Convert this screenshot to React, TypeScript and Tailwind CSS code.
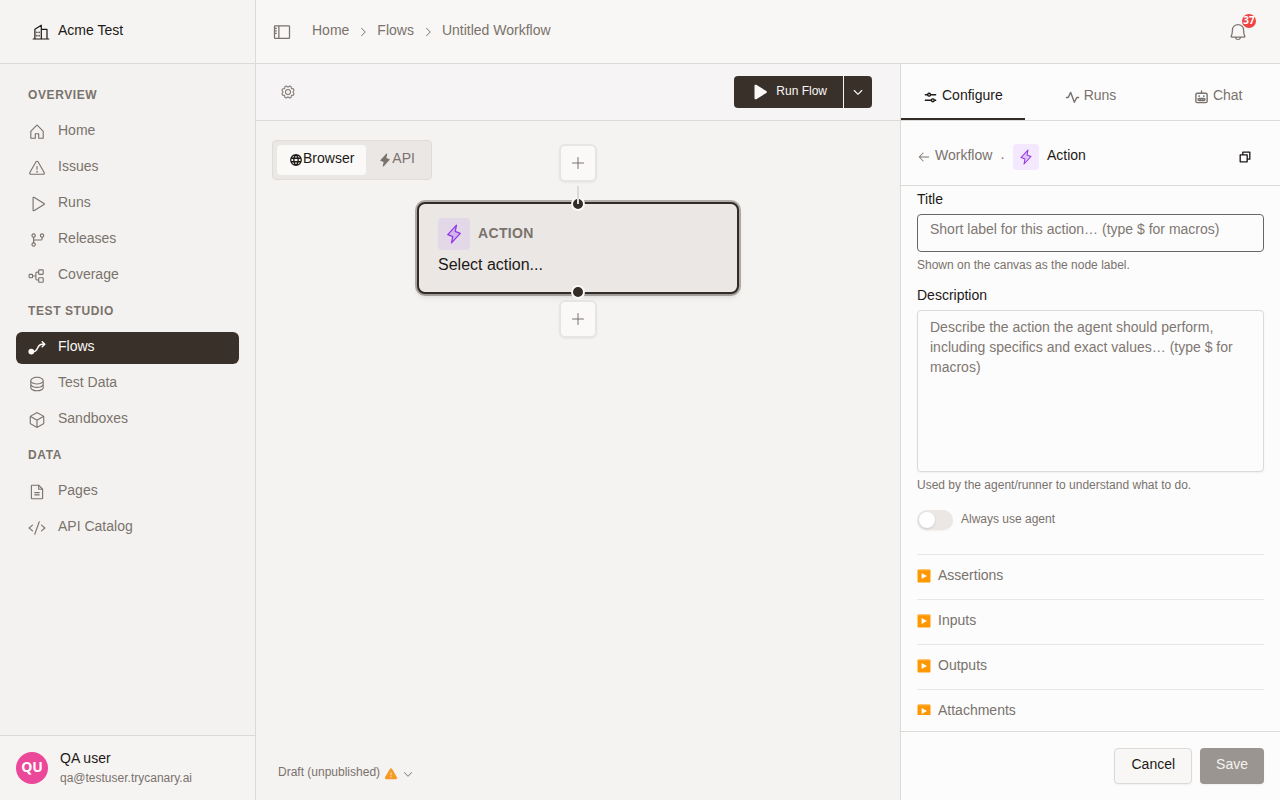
import { Fragment, useState } from 'react';
import type { ComponentType, ReactNode } from 'react';
import type { IconType } from 'react-icons';
import clsx from 'clsx';
import {
  PiArrowLeft,
  PiBell,
  PiCaretDown,
  PiCaretDownBold,
  PiCaretRight,
  PiCode,
  PiCopyBold,
  PiCube,
  PiDatabase,
  PiFileText,
  PiGear,
  PiGitBranch,
  PiGlobeBold,
  PiHouse,
  PiLightningDuotone,
  PiLightningFill,
  PiPlay,
  PiPlayFill,
  PiPlus,
  PiPulseBold,
  PiRobotBold,
  PiSidebar,
  PiSlidersHorizontalBold,
  PiTreeStructure,
  PiWarning,
  PiWarningFill,
} from 'react-icons/pi';

type NavItem = { label: string; icon: ComponentType<{ size?: number }>; active?: boolean };

function OfficeIcon({ size = 18 }: { size?: number }) {
  return (
    <svg width={size} height={size} viewBox="0 0 18 18" fill="none" stroke="currentColor" strokeWidth="1.2" strokeLinejoin="round" strokeLinecap="round" aria-hidden="true">
      <path d="M1.2 16h15.6M2.9 16V6.2L9.3 2.2V16M9.3 6.4H15V16" />
      <path d="M4.9 9v.6M7.1 9v.6M4.9 12.4v.6M7.1 12.4v.6" />
    </svg>
  );
}

function FlowIcon({ size = 18 }: { size?: number }) {
  return (
    <svg width={size} height={size} viewBox="0 0 18 18" fill="none" stroke="currentColor" strokeWidth="1.5" strokeLinejoin="round" strokeLinecap="round" aria-hidden="true">
      <circle cx="3.3" cy="12.6" r="2.9" fill="currentColor" stroke="none" />
      <path d="M5 12.9c5.6 0 3.6-7.6 9-7.6h2.6M14.2 2.8l2.6 2.5-2.6 2.5" />
    </svg>
  );
}

const navGroups: Array<{ title: string; items: NavItem[] }> = [
  {
    title: 'Overview',
    items: [
      { label: 'Home', icon: PiHouse },
      { label: 'Issues', icon: PiWarning },
      { label: 'Runs', icon: PiPlay },
      { label: 'Releases', icon: PiGitBranch },
      { label: 'Coverage', icon: PiTreeStructure },
    ],
  },
  {
    title: 'Test Studio',
    items: [
      { label: 'Flows', icon: FlowIcon, active: true },
      { label: 'Test Data', icon: PiDatabase },
      { label: 'Sandboxes', icon: PiCube },
    ],
  },
  {
    title: 'Data',
    items: [
      { label: 'Pages', icon: PiFileText },
      { label: 'API Catalog', icon: PiCode },
    ],
  },
];

const tabs: Array<{ label: string; icon: IconType }> = [
  { label: 'Configure', icon: PiSlidersHorizontalBold },
  { label: 'Runs', icon: PiPulseBold },
  { label: 'Chat', icon: PiRobotBold },
];

const sections = ['Assertions', 'Inputs', 'Outputs', 'Attachments'];

// Text sits slightly above the icon centre line everywhere in the app
function Label({ children }: { children: ReactNode }) {
  return <span className="pb-1 whitespace-nowrap">{children}</span>;
}

function Sidebar() {
  return (
    <aside className="flex w-64 shrink-0 flex-col border-r border-[#dcdad8] bg-[#f4f2f0]">
      <button type="button" className="flex h-16 shrink-0 items-center gap-2 border-b border-[#dcdad8] bg-[#f6f4f2] px-8 text-[#1c1917]">
        <OfficeIcon />
        <Label>Acme Test</Label>
      </button>
      <nav className="flex flex-1 flex-col gap-1 p-4">
        {navGroups.map((group) => (
          <Fragment key={group.title}>
            <h2 className="flex h-8 items-center px-3 text-xs font-bold tracking-wider uppercase">
              <span className="pb-0.5">{group.title}</span>
            </h2>
            {group.items.map(({ label, icon: Icon, active }) => (
              <a
                key={label}
                href="#"
                className={clsx('flex h-8 items-center gap-3 rounded-md px-3', active && 'bg-[#3a302a] text-[#faf9f7]')}
              >
                <Icon size={18} />
                <Label>{label}</Label>
              </a>
            ))}
          </Fragment>
        ))}
      </nav>
      <div className="flex items-center gap-3 border-t border-[#dcdad8] bg-[#f6f4f2] p-4">
        <span className="flex size-8 items-center justify-center rounded-full bg-[#ec4899] font-['Open_Sans',sans-serif] text-sm font-bold text-white">
          <span className="pb-0.5">QU</span>
        </span>
        <div className="flex h-8 flex-col justify-center">
          <span className="pb-1 leading-4 text-[#1c1917]">QA user</span>
          <span className="text-xs">qa@testuser.trycanary.ai</span>
        </div>
      </div>
    </aside>
  );
}

function Header() {
  return (
    <header className="flex h-16 shrink-0 items-center border-b border-[#dcdad8] bg-[#f8f7f5] pr-8 pl-4">
      <button type="button" aria-label="Toggle sidebar" className="mr-5">
        <PiSidebar size={20} />
      </button>
      <nav aria-label="Breadcrumb" className="flex items-center gap-2">
        <a href="#" className="flex"><Label>Home</Label></a>
        <PiCaretRight size={12} />
        <a href="#" className="flex"><Label>Flows</Label></a>
        <PiCaretRight size={12} />
        <Label>Untitled Workflow</Label>
      </nav>
      <button type="button" aria-label="Notifications" className="relative ml-auto">
        <PiBell size={20} />
        <span className="absolute -top-2 -right-2 flex h-3.5 min-w-3.5 items-center justify-center rounded-full bg-[#ef4444] font-['Open_Sans',sans-serif] text-[10px] leading-3 font-bold text-white">
          <span className="pb-0.5">37</span>
        </span>
      </button>
    </header>
  );
}

function Toolbar() {
  return (
    <div className="flex h-[57px] shrink-0 items-center justify-between border-b border-[#dcdad8] bg-[#f6f4f5] pr-7 pl-6">
      <button type="button" aria-label="Flow settings">
        <PiGear size={16} />
      </button>
      <div className="flex h-8 gap-px text-[#faf9f7]">
        <button type="button" className="flex items-center gap-2 rounded-l bg-[#3a302a] px-4 text-xs">
          <PiPlayFill size={18} />
          <span className="pb-0.5 whitespace-nowrap">Run Flow</span>
        </button>
        <button type="button" aria-label="More run options" className="flex w-7 items-center justify-center rounded-r bg-[#3a302a]">
          <PiCaretDownBold size={12} />
        </button>
      </div>
    </div>
  );
}

function AddButton({ className }: { className: string }) {
  return (
    <button
      type="button"
      aria-label="Add node"
      className={clsx('absolute left-1/2 flex size-[38px] -translate-x-1/2 items-center justify-center rounded-md border-2 border-[#e7e5e4] bg-[#faf9f8] shadow-xs', className)}
    >
      <PiPlus size={16} />
    </button>
  );
}

function Handle({ className }: { className: string }) {
  return <span className={clsx('absolute left-1/2 size-3.5 -translate-x-1/2 rounded-full border-2 border-[#faf9f7] bg-[#332b26]', className)} />;
}

function Canvas() {
  const [mode, setMode] = useState('Browser');
  const modes = [
    { label: 'Browser', icon: PiGlobeBold },
    { label: 'API', icon: PiLightningFill },
  ];
  return (
    <div className="relative flex-1 overflow-hidden bg-[#f4f3f1]">
      <div className="absolute top-[19px] left-4 flex h-10 rounded border border-[#dfdddb] bg-[#ebe7e5] p-1">
        {modes.map(({ label, icon: Icon }) => (
          <button
            key={label}
            type="button"
            onClick={() => setMode(label)}
            className={clsx('flex items-center px-3', mode === label && 'rounded-sm bg-[#faf9f7] text-[#1c1917]')}
          >
            <Icon size={14} />
            <Label>{label}</Label>
          </button>
        ))}
      </div>

      <AddButton className="top-[23px]" />
      <div className="absolute top-[81px] left-1/2 flex h-[92px] w-[322px] -translate-x-1/2 flex-col rounded-lg border-2 border-[#332b26] bg-[#ebe7e5] px-[19px] pt-[14px] shadow-md ring-2 ring-[#332b26]/35">
        <div className="flex items-center gap-2">
          <span className="flex size-8 items-center justify-center rounded bg-[#e2d8e8] text-[#9333ea]">
            <PiLightningDuotone size={20} />
          </span>
          <span className="pb-0.5 font-bold tracking-wide">ACTION</span>
        </div>
        <span className="pt-[3px] text-base text-[#1c1917]">Select action...</span>
        <Handle className="-top-[7px]" />
        <Handle className="-bottom-[7px]" />
      </div>
      <span className="absolute top-[65px] left-1/2 h-[18px] w-0.5 -translate-x-1/2 bg-[#dcdad8]" />
      <AddButton className="top-[179px]" />

      <button type="button" className="absolute bottom-4 left-[22px] flex items-center gap-1 text-xs">
        <span className="pb-1">Draft (unpublished)</span>
        <PiWarningFill size={14} className="text-[#f59a23]" />
        <PiCaretDown size={12} />
      </button>
    </div>
  );
}

function PlayBadge() {
  return (
    <svg viewBox="0 0 14 14" className="mb-0.5 size-3.5" aria-hidden="true">
      <rect x="0.5" y="0.5" width="13" height="13" rx="1" fill="#ff9800" />
      <path d="M1 1.2h12" stroke="#ffb84d" strokeWidth="0.6" />
      <path d="M4.6 4 10 7l-5.4 3z" fill="#fff" />
    </svg>
  );
}

function ConfigPanel() {
  const [tab, setTab] = useState('Configure');
  const [useAgent, setUseAgent] = useState(false);
  return (
    <aside className="flex w-[380px] shrink-0 flex-col border-l border-[#dcdad8] bg-[#fcfcfc]">
      <div role="tablist" className="flex h-[57px] shrink-0 gap-1 border-b border-[#dcdad8]">
        {tabs.map(({ label, icon: Icon }) => (
          <button
            key={label}
            type="button"
            role="tab"
            aria-selected={tab === label}
            onClick={() => setTab(label)}
            className={clsx(
              'flex flex-1 items-center justify-center gap-1 border-b-2 pt-3',
              tab === label ? 'border-[#332b26] text-[#1c1917]' : 'border-transparent',
            )}
          >
            <Icon size={15} />
            <Label>{label}</Label>
          </button>
        ))}
      </div>

      <div className="flex shrink-0 items-center border-b border-[#dcdad8] px-4 pt-[23px] pb-[15px]">
        <a href="#" className="flex items-center gap-1">
          <PiArrowLeft size={14} />
          <Label>Workflow</Label>
        </a>
        <span className="px-2">·</span>
        <span className="flex size-[26px] items-center justify-center rounded bg-[#f3e8fd] text-[#9333ea]">
          <PiLightningDuotone size={16} />
        </span>
        <span className="pb-1 pl-2 text-[#1c1917]">Action</span>
        <button type="button" aria-label="Duplicate" className="mr-3 ml-auto text-[#1c1917]">
          <PiCopyBold size={14} />
        </button>
      </div>

      <form className="flex min-h-0 flex-1 flex-col">
        <div className="mb-4 flex min-h-0 flex-1 flex-col overflow-hidden px-4 pt-[3px]">
          <label htmlFor="title" className="pb-[5px] text-[#1c1917]">Title</label>
          <input
            id="title"
            placeholder="Short label for this action… (type $ for macros)"
            className="h-[38px] shrink-0 rounded border border-[#6b6663] bg-[#fcfcfc] px-3 pb-2 outline-none placeholder:text-[#7f7772]"
          />
          <p className="pt-[5px] text-xs">Shown on the canvas as the node label.</p>
          <label htmlFor="description" className="pt-3 pb-[5px] text-[#1c1917]">Description</label>
          <textarea
            id="description"
            placeholder="Describe the action the agent should perform, including specifics and exact values… (type $ for macros)"
            className="h-[162px] shrink-0 resize-none rounded border border-[#dcdad8] bg-[#fcfcfc] px-3 py-1.5 shadow-xs outline-none placeholder:text-[#7f7772]"
          />
          <p className="pt-[5px] text-xs">Used by the agent/runner to understand what to do.</p>
          <label className="mt-[17px] mb-6 flex items-center gap-2 text-xs">
            <span className="relative flex h-5 w-9 items-center rounded-full bg-[#ebe7e5] p-0.5 shadow-xs">
              <input
                type="checkbox"
                role="switch"
                checked={useAgent}
                onChange={(e) => setUseAgent(e.target.checked)}
                className="peer absolute inset-0 cursor-pointer opacity-0"
              />
              <span className="size-4 rounded-full bg-white shadow-sm peer-checked:ml-auto" />
            </span>
            <span className="pb-0.5">Always use agent</span>
          </label>
          {sections.map((section) => (
            <button key={section} type="button" className="flex h-[45px] shrink-0 items-center gap-[7px] border-t border-[#e9e7e6]">
              <PlayBadge />
              <Label>{section}</Label>
            </button>
          ))}
        </div>
        <div className="flex shrink-0 justify-end gap-2 border-t border-[#dcdad8] p-4">
          <button type="button" className="flex h-9 items-center rounded border border-[#dcdad8] bg-[#f8f7f5] px-4 text-[#1c1917] shadow-xs">
            <Label>Cancel</Label>
          </button>
          <button type="submit" disabled className="flex h-9 items-center rounded bg-[#9b9591] px-4 text-[#f4f2f0] shadow-xs">
            <Label>Save</Label>
          </button>
        </div>
      </form>
    </aside>
  );
}

export default function App() {
  return (
    <div className="flex h-screen overflow-hidden bg-[#f4f3f1] font-['Liberation_Sans',Arial,sans-serif] text-sm text-[#7a726c]">
      <Sidebar />
      <div className="flex min-w-0 flex-1 flex-col">
        <Header />
        <div className="flex min-h-0 flex-1">
          <main className="flex min-w-0 flex-1 flex-col">
            <Toolbar />
            <Canvas />
          </main>
          <ConfigPanel />
        </div>
      </div>
    </div>
  );
}
